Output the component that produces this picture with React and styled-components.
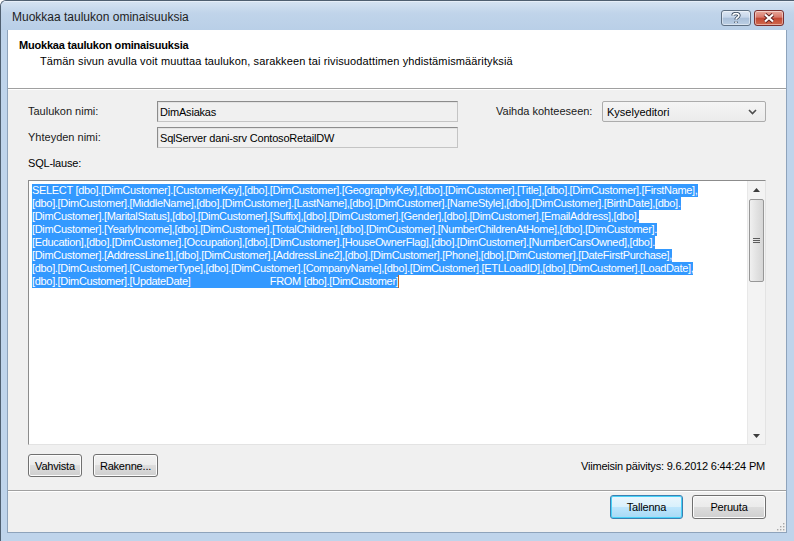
import styled, { createGlobalStyle } from "styled-components";

const GlobalStyle = createGlobalStyle`
  html, body {
    margin: 0;
    padding: 0;
    background: #ffffff;
  }
  body {
    font-family: "Liberation Sans", Arial, sans-serif;
    font-size: 11px;
    color: #000;
  }
`;

const sqlLines = [
  "SELECT [dbo].[DimCustomer].[CustomerKey],[dbo].[DimCustomer].[GeographyKey],[dbo].[DimCustomer].[Title],[dbo].[DimCustomer].[FirstName],",
  "[dbo].[DimCustomer].[MiddleName],[dbo].[DimCustomer].[LastName],[dbo].[DimCustomer].[NameStyle],[dbo].[DimCustomer].[BirthDate],[dbo].",
  "[DimCustomer].[MaritalStatus],[dbo].[DimCustomer].[Suffix],[dbo].[DimCustomer].[Gender],[dbo].[DimCustomer].[EmailAddress],[dbo].",
  "[DimCustomer].[YearlyIncome],[dbo].[DimCustomer].[TotalChildren],[dbo].[DimCustomer].[NumberChildrenAtHome],[dbo].[DimCustomer].",
  "[Education],[dbo].[DimCustomer].[Occupation],[dbo].[DimCustomer].[HouseOwnerFlag],[dbo].[DimCustomer].[NumberCarsOwned],[dbo].",
  "[DimCustomer].[AddressLine1],[dbo].[DimCustomer].[AddressLine2],[dbo].[DimCustomer].[Phone],[dbo].[DimCustomer].[DateFirstPurchase],",
  "[dbo].[DimCustomer].[CustomerType],[dbo].[DimCustomer].[CompanyName],[dbo].[DimCustomer].[ETLLoadID],[dbo].[DimCustomer].[LoadDate],",
  "[dbo].[DimCustomer].[UpdateDate]" + " ".repeat(29) + "FROM [dbo].[DimCustomer]",
];

const Window = styled.div`
  width: 794px;
  height: 541px;
  box-sizing: border-box;
  display: flex;
  flex-direction: column;
  background: #bfd4eb;
  border-top: 1px solid #4f5f70;
  border-left: 1px solid #4f5f70;
  border-radius: 6px 0 0 0;
  overflow: hidden;
`;

const TitleBar = styled.div`
  height: 29px;
  flex-shrink: 0;
  display: flex;
  align-items: center;
  justify-content: space-between;
  padding: 0 10px 0 11px;
  background: linear-gradient(#d4e2f1, #c0d4ea 40%, #b9cfe7);
  border-top: 1px solid #e6eef8;
  box-sizing: border-box;
`;

const TitleText = styled.span`
  font-family: "Liberation Sans", Arial, sans-serif;
  font-size: 12px;
  color: #1e1e1e;
  margin-top: 2px;
`;

const CaptionButtons = styled.div`
  display: flex;
  gap: 3px;
  margin-top: 3px;
`;

const CaptionButton = styled.div`
  width: 30px;
  height: 16px;
  box-sizing: border-box;
  border: 1px solid ${(p) => (p.$close ? "#7a3030" : "#5e6f82")};
  border-radius: 3px;
  display: flex;
  align-items: center;
  justify-content: center;
  background: ${(p) =>
    p.$close
      ? "linear-gradient(#e8a99b, #d8786a 45%, #c14632 50%, #d06a4e)"
      : "linear-gradient(#dde7f3, #c6d6ea 45%, #a9bfd9 50%, #bccfe4)"};
  box-shadow: inset 0 0 0 1px rgba(255, 255, 255, 0.45);
`;

const Client = styled.div`
  flex: 1;
  margin: 0 7px 8px 6px;
  display: flex;
  flex-direction: column;
  background: #f0f0f0;
  border: 1px solid #8ea3bb;
  border-top: none;
  position: relative;
`;

const Header = styled.div`
  height: 59px;
  box-sizing: border-box;
  background: #ffffff;
  border-bottom: 1px solid #a0a0a0;
  padding: 9px 11px 0;
`;

const Heading = styled.div`
  font-weight: bold;
  line-height: 13px;
  letter-spacing: -0.2px;
`;

const Subtitle = styled.div`
  line-height: 13px;
  margin: 3px 0 0 21px;
  letter-spacing: 0.12px;
`;

const Body = styled.div`
  flex: 1;
  display: flex;
  flex-direction: column;
  padding: 11px 20px 0;
  border-top: 1px solid #ffffff;
`;

const FieldGrid = styled.div`
  display: grid;
  grid-template-columns: 129px 301px 38px 106px 164px;
  grid-auto-rows: 21px;
  row-gap: 5px;
  align-items: center;
`;

const Label = styled.span`
  line-height: 13px;
  color: #1a1a1a;
`;

const ReadOnlyBox = styled.div`
  height: 21px;
  box-sizing: border-box;
  background: #f0f0f0;
  border: 1px solid #c4c4c4;
  border-top-color: #8c8c8c;
  border-left-color: #8c8c8c;
  box-shadow: inset 1px 1px 0 #e3e3e3;
  padding: 0 2px;
  display: flex;
  align-items: center;
  letter-spacing: -0.2px;
`;

const SelectBox = styled.div`
  height: 21px;
  box-sizing: border-box;
  border: 1px solid #acacac;
  border-radius: 2px;
  background: linear-gradient(#f5f5f5, #ebebeb);
  display: flex;
  align-items: center;
  justify-content: space-between;
  padding: 0 8px 0 4px;
`;

const SqlLabel = styled.div`
  margin-top: 9px;
  line-height: 13px;
  letter-spacing: -0.2px;
`;

const SqlBox = styled.div`
  margin-top: 10px;
  height: 265px;
  box-sizing: border-box;
  background: #ffffff;
  border: 1px solid #e3e3e3;
  border-top-color: #8c8c8c;
  border-left-color: #8c8c8c;
  display: flex;
`;

const SqlText = styled.div`
  flex: 1;
  padding: 3px 0 0 3px;
  overflow: hidden;
`;

const SqlLine = styled.div`
  width: max-content;
  height: 13px;
  line-height: 13px;
  white-space: pre;
  background: #3399ff;
  color: #ffffff;
  letter-spacing: -0.32px;
  display: flex;
  align-items: center;
`;

const Caret = styled.span`
  display: inline-block;
  width: 1px;
  height: 13px;
  background: #c8651c;
`;

const ScrollBar = styled.div`
  width: 17px;
  display: flex;
  flex-direction: column;
  background: #f3f3f3;
  border-left: 1px solid #e8e8e8;
`;

const ScrollArrow = styled.div`
  height: 17px;
  display: flex;
  align-items: center;
  justify-content: center;
`;

const Track = styled.div`
  flex: 1;
  padding-top: 1px;
`;

const Thumb = styled.div`
  margin: 0 1px;
  height: 83px;
  box-sizing: border-box;
  border: 1px solid #979797;
  border-radius: 2px;
  background: linear-gradient(90deg, #f0f0f0, #e2e2e2 50%, #d6d6d6);
  display: flex;
  align-items: center;
  justify-content: center;
`;

const ActionRow = styled.div`
  margin-top: 9px;
  display: flex;
  align-items: center;
  justify-content: space-between;
`;

const ButtonGroup = styled.div`
  display: flex;
  gap: ${(p) => p.$gap || "11px"};
`;

const Button = styled.div`
  width: ${(p) => p.$w}px;
  height: ${(p) => p.$h || 24}px;
  box-sizing: border-box;
  border: 1px solid ${(p) => (p.$default ? "#3c7fb1" : "#707070")};
  border-radius: 3px;
  display: flex;
  align-items: center;
  justify-content: center;
  background: ${(p) =>
    p.$default
      ? "linear-gradient(#eaf6fd, #d9f0fc 50%, #bee6fd 50%, #a7d9f5)"
      : "linear-gradient(#f2f2f2, #ebebeb 50%, #dddddd 50%, #cfcfcf)"};
  box-shadow: inset 0 0 0 1px ${(p) => (p.$default ? "#48d2f8" : "#fcfcfc")};
  letter-spacing: -0.2px;
  color: #000;
`;

const Updated = styled.span`
  letter-spacing: -0.2px;
  margin-right: 1px;
`;

const Footer = styled.div`
  margin-top: 12px;
  border-top: 1px solid #a0a0a0;
  padding: 4px 20px 13px 0;
  display: flex;
  justify-content: flex-end;
  box-shadow: inset 0 1px 0 #ffffff;
`;

const Grip = styled.svg`
  position: absolute;
  right: 1px;
  bottom: 1px;
`;

function Chevron() {
  return (
    <svg width="9" height="6" viewBox="0 0 9 6">
      <path d="M1 1 L4.5 4.5 L8 1" fill="none" stroke="#4d4d4d" strokeWidth="1.6" />
    </svg>
  );
}

function Arrow({ down }) {
  return (
    <svg width="7" height="4" viewBox="0 0 7 4">
      <path d={down ? "M0 0 H7 L3.5 4 Z" : "M0 4 H7 L3.5 0 Z"} fill="#3c3c3c" />
    </svg>
  );
}

export default function App() {
  return (
    <>
      <GlobalStyle />
      <Window>
        <TitleBar>
          <TitleText>Muokkaa taulukon ominaisuuksia</TitleText>
          <CaptionButtons>
            <CaptionButton>
              <svg width="10" height="12" viewBox="0 0 10 12">
                <path
                  d="M2 3.5 C2 1 8 1 8 3.5 C8 5.5 5 5.5 5 7.5 M5 9.5 V11"
                  fill="none"
                  stroke="#2c3e52"
                  strokeWidth="3.2"
                />
                <path
                  d="M2 3.5 C2 1 8 1 8 3.5 C8 5.5 5 5.5 5 7.5 M5 9.5 V11"
                  fill="none"
                  stroke="#ffffff"
                  strokeWidth="1.6"
                />
              </svg>
            </CaptionButton>
            <CaptionButton $close>
              <svg width="14" height="10" viewBox="0 0 14 10">
                <path d="M3 1.5 L11 8.5 M11 1.5 L3 8.5" stroke="#5a2020" strokeWidth="4" />
                <path d="M3 1.5 L11 8.5 M11 1.5 L3 8.5" stroke="#ffffff" strokeWidth="2.2" />
              </svg>
            </CaptionButton>
          </CaptionButtons>
        </TitleBar>
        <Client>
          <Header>
            <Heading>Muokkaa taulukon ominaisuuksia</Heading>
            <Subtitle>
              Tämän sivun avulla voit muuttaa taulukon, sarakkeen tai rivisuodattimen yhdistämismäärityksiä
            </Subtitle>
          </Header>
          <Body>
            <FieldGrid>
              <Label>Taulukon nimi:</Label>
              <ReadOnlyBox>DimAsiakas</ReadOnlyBox>
              <span />
              <Label>Vaihda kohteeseen:</Label>
              <SelectBox>
                <span>Kyselyeditori</span>
                <Chevron />
              </SelectBox>
              <Label>Yhteyden nimi:</Label>
              <ReadOnlyBox>SqlServer dani-srv ContosoRetailDW</ReadOnlyBox>
            </FieldGrid>
            <SqlLabel>SQL-lause:</SqlLabel>
            <SqlBox>
              <SqlText>
                {sqlLines.map((line, i) => (
                  <SqlLine key={i}>
                    {line}
                    {i === sqlLines.length - 1 && <Caret />}
                  </SqlLine>
                ))}
              </SqlText>
              <ScrollBar>
                <ScrollArrow>
                  <Arrow />
                </ScrollArrow>
                <Track>
                  <Thumb>
                    <svg width="7" height="7" viewBox="0 0 7 7">
                      <path d="M0 1.5 H7 M0 3.5 H7 M0 5.5 H7" stroke="#5c5c5c" strokeWidth="1" />
                    </svg>
                  </Thumb>
                </Track>
                <ScrollArrow>
                  <Arrow down />
                </ScrollArrow>
              </ScrollBar>
            </SqlBox>
            <ActionRow>
              <ButtonGroup>
                <Button $w={54} $h={23}>Vahvista</Button>
                <Button $w={65} $h={23}>Rakenne...</Button>
              </ButtonGroup>
              <Updated>Viimeisin päivitys: 9.6.2012 6:44:24 PM</Updated>
            </ActionRow>
          </Body>
          <Footer>
            <ButtonGroup $gap="9px">
              <Button $w={73} $default>
                Tallenna
              </Button>
              <Button $w={74}>Peruuta</Button>
            </ButtonGroup>
          </Footer>
          <Grip width="8" height="8" viewBox="0 0 8 8">
            <g fill="#a8a8a8">
              <rect x="6" y="0" width="1.4" height="1.4" />
              <rect x="3" y="3" width="1.4" height="1.4" />
              <rect x="6" y="3" width="1.4" height="1.4" />
              <rect x="0" y="6" width="1.4" height="1.4" />
              <rect x="3" y="6" width="1.4" height="1.4" />
              <rect x="6" y="6" width="1.4" height="1.4" />
            </g>
          </Grip>
        </Client>
      </Window>
    </>
  );
}
